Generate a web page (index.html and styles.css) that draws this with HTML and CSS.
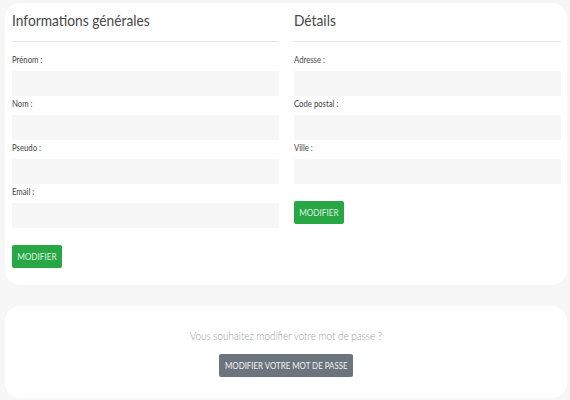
FILE: index.html
```html
<!DOCTYPE html>
<html lang="fr">
<head>
<meta charset="utf-8">
<link rel="stylesheet" href="styles.css">
</head>
<body>
<div class="page">
  <section class="card card-main">
    <div class="col">
      <h2 class="title"><span class="nx">Informations générales</span></h2>
      <hr class="sep">
      <div class="field"><label><span class="nx">Prénom :</span></label><div class="input"></div></div>
      <div class="field"><label><span class="nx">Nom :</span></label><div class="input"></div></div>
      <div class="field"><label><span class="nx">Pseudo :</span></label><div class="input"></div></div>
      <div class="field"><label><span class="nx">Email :</span></label><div class="input"></div></div>
      <button class="btn btn-green"><span class="nx nx-c">MODIFIER</span></button>
    </div>
    <div class="col">
      <h2 class="title"><span class="nx">Détails</span></h2>
      <hr class="sep">
      <div class="field"><label><span class="nx">Adresse :</span></label><div class="input"></div></div>
      <div class="field"><label><span class="nx">Code postal :</span></label><div class="input"></div></div>
      <div class="field"><label><span class="nx">Ville :</span></label><div class="input"></div></div>
      <button class="btn btn-green"><span class="nx nx-c">MODIFIER</span></button>
    </div>
  </section>
  <section class="card card-pass">
    <p class="pass-text"><span class="nx nx-c">Vous souhaitez modifier votre mot de passe ?</span></p>
    <button class="btn btn-grey"><span class="nx nx-c">MODIFIER VOTRE MOT DE PASSE</span></button>
  </section>
</div>
</body>
</html>
```
FILE: styles.css
```css
* { box-sizing: border-box; }
html, body { margin: 0; padding: 0; }
body {
  background: #f7f7f7;
  font-family: Lato, "Liberation Sans", sans-serif;
  width: 570px;
  height: 400px;
  overflow: hidden;
}
.nx {
  display: inline-block;
  transform: scaleX(0.86);
  transform-origin: left center;
  white-space: nowrap;
}
.nx-c { transform-origin: center center; }
.page {
  padding: 3px 3px 0 5px;
  display: flex;
  flex-direction: column;
  gap: 21px;
}
.card {
  background: #fff;
  border-radius: 15px;
  width: 562px;
}
.card-main {
  height: 282px;
  padding: 7px 6px 0 7px;
  display: flex;
  gap: 15px;
}
.col {
  width: 267px;
  display: flex;
  flex-direction: column;
}
.title {
  margin: 0;
  font-weight: 400;
  font-size: 16px;
  color: #474747;
  line-height: 20px;
}
.sep {
  margin: 11px 0 0;
  border: 0;
  border-top: 1px solid #e6e6e6;
  flex-shrink: 0;
}
.field {
  display: flex;
  flex-direction: column;
  flex-shrink: 0;
}
.field label {
  font-size: 9px;
  color: #444;
  line-height: 11px;
  height: 19px;
  padding-top: 2px;
}
.sep + .field { margin-top: 10px; }
.input {
  height: 25px;
  background: #f7f7f7;
}
.btn {
  border: 0;
  font-family: inherit;
  font-size: 9.5px;
  color: #fff;
  border-radius: 2px;
  height: 23px;
  padding: 0;
  align-self: flex-start;
  flex-shrink: 0;
  white-space: nowrap;
  display: flex;
  align-items: center;
  justify-content: center;
}
.btn-green {
  background: #28a745;
  color: #dff2e3;
  width: 50px;
  margin-top: 17px;
}
.card-pass {
  height: 92px;
  display: flex;
  flex-direction: column;
  align-items: center;
  padding-top: 22px;
}
.pass-text {
  margin: 0;
  font-size: 11.5px;
  font-weight: 300;
  color: #a0a0a0;
  line-height: 16px;
}
.btn-grey {
  background: #6c757d;
  color: #f2f2f2;
  font-size: 9.2px;
  margin-top: 10px;
  width: 134px;
  align-self: center;
}
```
